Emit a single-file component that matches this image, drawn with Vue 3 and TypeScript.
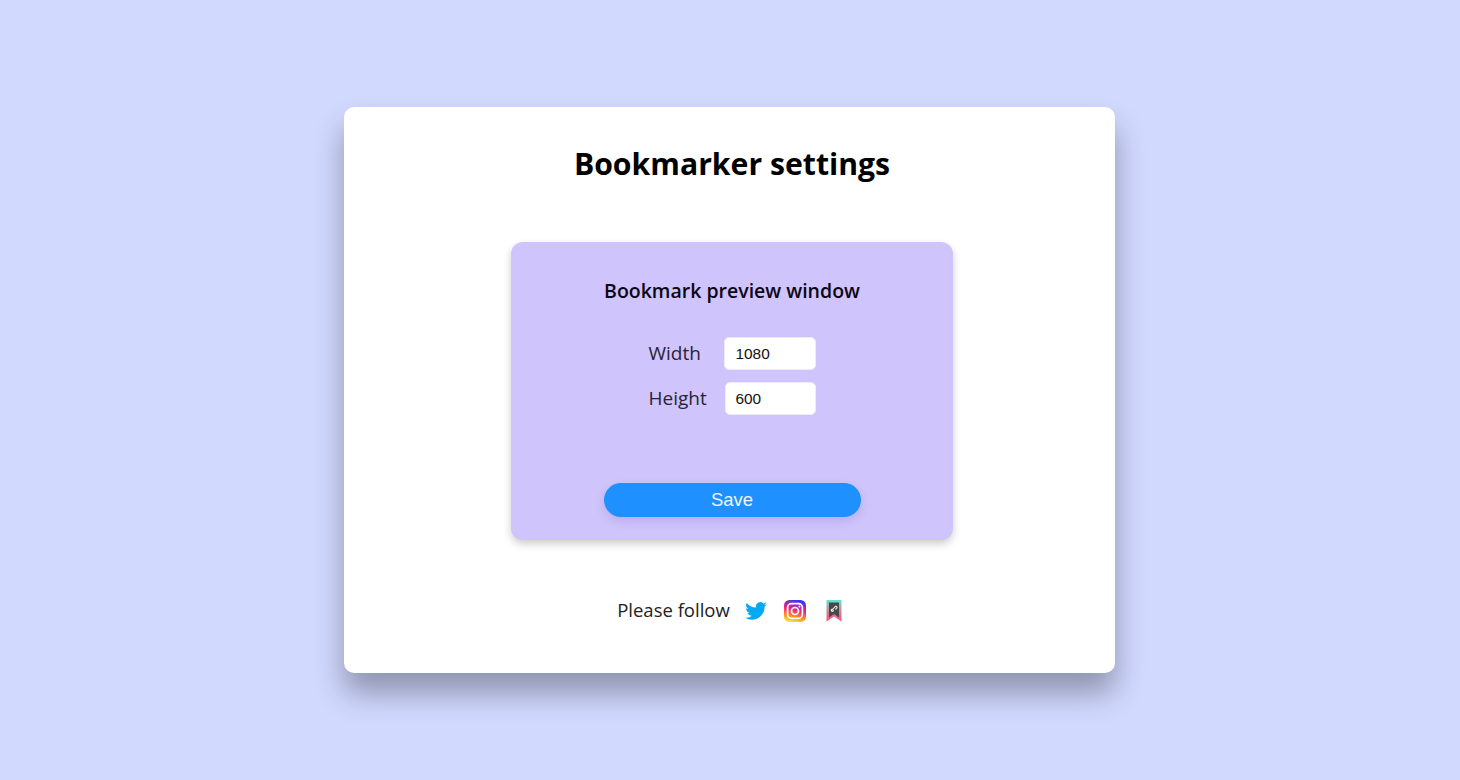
<script setup lang="ts">
import { ref } from 'vue'
const width = ref('1080')
const height = ref('600')
</script>

<template>
  <main class="page">
    <section class="card">
      <h1 class="title">Bookmarker settings</h1>
      <div class="panel">
        <h2 class="panel-title">Bookmark preview window</h2>
        <div class="fields">
          <label class="field">
            <span class="label">Width</span>
            <input v-model="width" class="input input-w" type="text" />
          </label>
          <label class="field">
            <span class="label">Height</span>
            <input v-model="height" class="input input-h" type="text" />
          </label>
        </div>
        <button class="save" type="button">Save</button>
      </div>
      <footer class="follow">
        <span class="follow-text">Please follow</span>
        <svg class="ic tw" width="22" height="18" viewBox="0 0 24 20" aria-hidden="true">
          <path fill="#03a9f4" d="M24 2.37a9.6 9.6 0 0 1-2.83.8A5 5 0 0 0 23.34.4a9.8 9.8 0 0 1-3.12 1.22A4.92 4.92 0 0 0 11.8 5.1c0 .39.03.77.12 1.13A13.9 13.9 0 0 1 1.77 1.02a4.98 4.98 0 0 0 1.51 6.6 4.86 4.86 0 0 1-2.22-.61v.05a4.93 4.93 0 0 0 3.95 4.83 4.9 4.9 0 0 1-2.22.08 4.96 4.96 0 0 0 4.6 3.43A9.9 9.9 0 0 1 0 17.45 13.85 13.85 0 0 0 7.55 19.7c9.05 0 14-7.54 14-14.08 0-.22 0-.43-.02-.64A9.9 9.9 0 0 0 24 2.37z"/>
        </svg>
        <svg class="ic ig" width="22" height="22" viewBox="0 0 22 22" aria-hidden="true">
          <defs>
            <linearGradient id="igGrad" x1="0.3" y1="1" x2="0.55" y2="0">
              <stop offset="0" stop-color="#ffe04a"/>
              <stop offset="0.28" stop-color="#ff8a1f"/>
              <stop offset="0.58" stop-color="#f01f8c"/>
              <stop offset="1" stop-color="#3f33f2"/>
            </linearGradient>
          </defs>
          <rect width="22" height="22" rx="5.5" fill="url(#igGrad)"/>
          <rect x="3.6" y="3.6" width="14.8" height="14.8" rx="4" fill="none" stroke="#fff" stroke-width="1.7"/>
          <circle cx="11" cy="11" r="3.5" fill="none" stroke="#fff" stroke-width="1.7"/>
          <circle cx="15.4" cy="6.6" r="1" fill="#fff"/>
        </svg>
        <svg class="ic bm" width="16" height="22" viewBox="0 0 16 22" aria-hidden="true">
          <defs>
            <linearGradient id="bmGrad" x1="0" y1="0" x2="0" y2="1">
              <stop offset="0" stop-color="#5fe8d2"/>
              <stop offset="0.5" stop-color="#c58a9a"/>
              <stop offset="1" stop-color="#ff4d7d"/>
            </linearGradient>
          </defs>
          <path fill="url(#bmGrad)" d="M0.5 0h15v21.5l-7.5-5-7.5 5z"/>
          <path fill="#474747" d="M3 2.5h10v15l-5-3.4-5 3.4z"/>
          <path fill="none" stroke="#e4e4e4" stroke-width="1.2" stroke-linecap="round" d="M6.2 9.8l1.3-1.3M8.3 7.5l.9-.9a1 1 0 0 1 1.5 1.5l-.9.9M7.5 10.6l-.4.4a1 1 0 0 1-1.5-1.5"/>
        </svg>
      </footer>
    </section>
  </main>
</template>

<style>
html, body { margin: 0; background: #d2d9ff; }
</style>

<style scoped>
.page {
  min-height: 780px;
  box-sizing: border-box;
  padding-right: 1px;
  display: flex;
  align-items: center;
  justify-content: center;
  background: #d2d9ff;
  font-family: "Open Sans", "Noto Sans", sans-serif;
}
.card {
  width: 771px;
  height: 566px;
  box-sizing: border-box;
  padding-top: 34px;
  padding-left: 5px;
  background: #fff;
  border-radius: 10px;
  box-shadow: 0 20px 30px rgba(0, 0, 0, 0.32);
  display: flex;
  flex-direction: column;
  align-items: center;
}
.title {
  margin: 0;
  height: 46px;
  line-height: 46px;
  font-size: 30.2px;
  font-weight: 700;
  color: #000;
}
.panel {
  width: 442px;
  height: 298px;
  margin-top: 55px;
  box-sizing: border-box;
  padding-top: 34px;
  background: #cfc4fb;
  border-radius: 12px;
  box-shadow: 0 4px 8px rgba(0, 0, 0, 0.2);
  display: flex;
  flex-direction: column;
  align-items: center;
}
.panel-title {
  margin: 0;
  height: 28px;
  line-height: 30px;
  font-size: 19.5px;
  font-weight: 600;
  color: #0d0616;
}
.fields {
  margin-top: 32px;
  display: flex;
  flex-direction: column;
  gap: 11px;
  width: 167px;
}
.field {
  display: flex;
  align-items: center;
  justify-content: space-between;
}
.label {
  font-size: 19px;
  line-height: 34px;
  color: #2a2238;
}
.input {
  height: 33px;
  margin-top: 1px;
  box-sizing: border-box;
  border: 1px solid #efebfd;
  border-radius: 5px;
  background: #fff;
  padding: 0 10px 0 11px;
  font-family: "Liberation Sans", Arial, sans-serif;
  font-size: 15.4px;
  color: #111;
  outline: none;
}
.input-w { width: 92px; }
.input-h { width: 91px; padding-left: 10px; }
.save {
  margin-top: 68px;
  width: 257px;
  height: 34px;
  border: none;
  border-radius: 17px;
  background: #1e90ff;
  color: #eef5ff;
  font-family: "Liberation Sans", Arial, sans-serif;
  font-size: 18.5px;
  box-shadow: 0 4px 10px rgba(80, 60, 160, 0.16);
  padding: 0;
}
.follow {
  margin-top: 56px;
  display: flex;
  align-items: center;
  margin-left: -5px;
  height: 28px;
}
.follow-text {
  font-size: 18.5px;
  line-height: 26px;
  color: #222;
}
.ic { margin-top: 1px; }
.tw { margin-left: 15px; }
.ig { margin-left: 17px; }
.bm { margin-left: 20px; }
</style>
